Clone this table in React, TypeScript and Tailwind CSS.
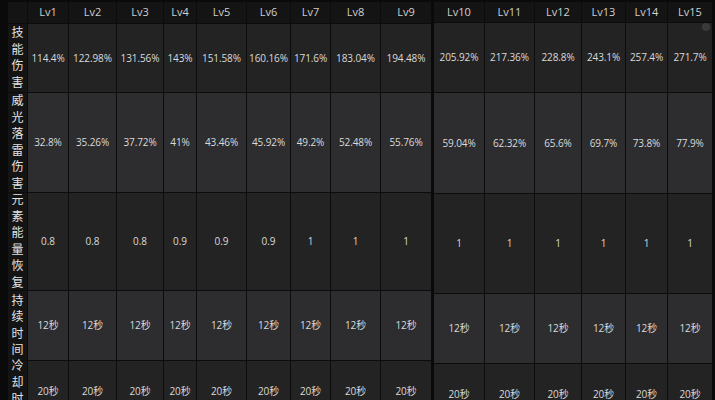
import React from 'react';

type Table = {
  levels: string[];
  widths: number[];
  rowHeights: number[];
  rows: string[][];
  withLabels: boolean;
};

const labels = ['技能伤害', '威光落雷伤害', '元素能量恢复', '持续时间', '冷却时间'];

const leftTable: Table = {
  levels: ['Lv1', 'Lv2', 'Lv3', 'Lv4', 'Lv5', 'Lv6', 'Lv7', 'Lv8', 'Lv9'],
  widths: [40, 47, 46, 32, 49, 43, 39, 49, 50],
  rowHeights: [21, 68, 99, 97, 69, 60],
  withLabels: true,
  rows: [
    ['114.4%', '122.98%', '131.56%', '143%', '151.58%', '160.16%', '171.6%', '183.04%', '194.48%'],
    ['32.8%', '35.26%', '37.72%', '41%', '43.46%', '45.92%', '49.2%', '52.48%', '55.76%'],
    ['0.8', '0.8', '0.8', '0.9', '0.9', '0.9', '1', '1', '1'],
    ['12秒', '12秒', '12秒', '12秒', '12秒', '12秒', '12秒', '12秒', '12秒'],
    ['20秒', '20秒', '20秒', '20秒', '20秒', '20秒', '20秒', '20秒', '20秒'],
  ],
};

const rightTable: Table = {
  levels: ['Lv10', 'Lv11', 'Lv12', 'Lv13', 'Lv14', 'Lv15'],
  widths: [50, 49, 46, 43, 41, 44],
  rowHeights: [20, 69, 100, 99, 69, 60],
  withLabels: false,
  rows: [
    ['205.92%', '217.36%', '228.8%', '243.1%', '257.4%', '271.7%'],
    ['59.04%', '62.32%', '65.6%', '69.7%', '73.8%', '77.9%'],
    ['1', '1', '1', '1', '1', '1'],
    ['12秒', '12秒', '12秒', '12秒', '12秒', '12秒'],
    ['20秒', '20秒', '20秒', '20秒', '20秒', '20秒'],
  ],
};

const rowBg = ['bg-[#232323]', 'bg-[#2d2d2f]', 'bg-[#232323]', 'bg-[#2d2d2f]', 'bg-[#232323]'];

function LevelTable({ table }: { table: Table }) {
  const cols = (table.withLabels ? [19] : []).concat(table.widths);
  return (
    <div
      className="grid gap-px bg-[#0c0c0c]"
      style={{
        gridTemplateColumns: cols.map((w) => `${w}px`).join(' '),
        gridTemplateRows: table.rowHeights.map((h) => `${h}px`).join(' '),
      }}
    >
      {table.withLabels && <div className="bg-[#141414]" />}
      {table.levels.map((lv) => (
        <div key={lv} className="flex items-center justify-center bg-[#141414] text-[11px] text-[#cfcfcf]">
          {lv}
        </div>
      ))}
      {table.rows.map((row, r) => (
        <React.Fragment key={r}>
          {table.withLabels && (
            <div className="flex flex-col items-center justify-center bg-[#141414] text-[12px] leading-[16.5px] text-[#e2e2e2]">
              {labels[r].split('').map((ch, i) => (
                <span key={i}>{ch}</span>
              ))}
            </div>
          )}
          {row.map((v, c) => (
            <div
              key={c}
              className={`flex items-center justify-center whitespace-nowrap text-[10px] tracking-[-0.1px] text-[#dadada] ${rowBg[r]}`}
            >
              {v}
            </div>
          ))}
        </React.Fragment>
      ))}
    </div>
  );
}

export default function App() {
  return (
    <div
      className="flex h-[400px] w-[715px] overflow-hidden bg-[#0a0a0a] pt-[2px] pl-[8px]"
      style={{ fontFamily: '"Open Sans", "Noto Sans CJK SC", sans-serif' }}
    >
      <LevelTable table={leftTable} />
      <div className="w-[3px] shrink-0" />
      <div className="relative">
        <LevelTable table={rightTable} />
        <div className="absolute right-[2px] top-[21px] h-[8px] w-[8px] rounded-full bg-[#3a3a3a]" />
      </div>
    </div>
  );
}
